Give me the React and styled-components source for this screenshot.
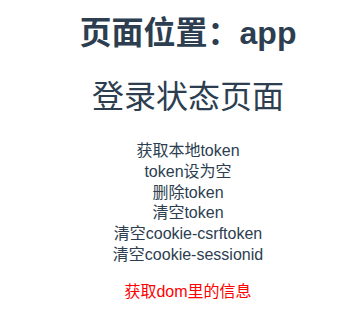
import React from 'react';
import styled, { createGlobalStyle } from 'styled-components';

const GlobalStyle = createGlobalStyle`
  html, body {
    margin: 0;
    padding: 0;
    background: #ffffff;
  }
  body {
    font-family: "Liberation Sans", Arial, "Noto Sans CJK SC", sans-serif;
    -webkit-font-smoothing: antialiased;
  }
`;

const Page = styled.div`
  width: 360px;
  margin-left: 8px;
  padding-top: 12px;
  color: #2c3e50;
  text-align: center;
  display: flex;
  flex-direction: column;
  align-items: center;
`;

const Title = styled.h1`
  margin: 0;
  font-size: 32px;
  line-height: 42px;
  font-weight: bold;
`;

const SubTitle = styled.h2`
  margin: 22px 0 0;
  font-size: 32px;
  line-height: 42px;
  font-weight: normal;
`;

const ActionList = styled.div`
  margin-top: 23px;
  display: flex;
  flex-direction: column;
  align-items: center;
`;

const ActionItem = styled.div`
  font-size: 16px;
  line-height: 20.8px;
  color: ${props => props.danger ? '#ff0000' : '#2c3e50'};
  cursor: pointer;
  white-space: nowrap;
`;

const DomInfo = styled(ActionItem)`
  margin-top: 16px;
`;

const actions = [
  '获取本地token',
  'token设为空',
  '删除token',
  '清空token',
  '清空cookie-csrftoken',
  '清空cookie-sessionid',
];

const App = () => {
  return (
    <>
      <GlobalStyle />
      <Page>
        <Title>页面位置：app</Title>
        <SubTitle>登录状态页面</SubTitle>
        <ActionList>
          {actions.map(a => (
            <ActionItem key={a}>{a}</ActionItem>
          ))}
        </ActionList>
        <DomInfo danger>获取dom里的信息</DomInfo>
      </Page>
    </>
  );
};

export default App;
